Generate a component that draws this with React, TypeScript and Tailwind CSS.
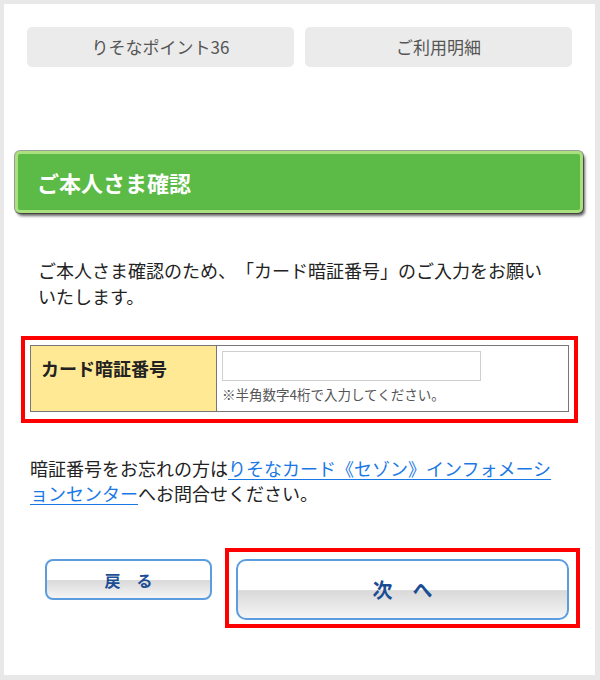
export default function App() {
  const font = { fontFamily: '"Noto Sans CJK JP", "Noto Sans", sans-serif' };
  return (
    <div
      className="w-[600px] h-[680px] bg-[#e8e8e8] pt-[4px] pl-[4px] pr-[5px] pb-[5px] [text-spacing-trim:space-all]"
      style={font}
    >
      <div className="h-full bg-white flex flex-col">
        {/* tabs */}
        <div className="flex gap-[11px] pt-[23px] px-[23px]">
          <div className="flex-1 h-[40px] rounded-[5px] bg-[#ebebeb] flex items-center justify-center text-[17px] text-[#555]">
            りそなポイント36
          </div>
          <div className="flex-1 h-[40px] rounded-[5px] bg-[#ebebeb] flex items-center justify-center text-[17px] text-[#555]">
            ご利用明細
          </div>
        </div>

        {/* header */}
        <div className="mt-[84px] ml-[11px] mr-[12px] h-[62px] rounded-[5px] bg-[#5cba46] border-[3px] border-[#abe07f] shadow-[2px_3px_3px_rgba(0,0,0,0.6),0_0_0_1px_#9c9c9c] flex items-center pl-[19px]">
          <h1 className="text-[22px] font-bold text-white leading-none">ご本人さま確認</h1>
        </div>

        {/* message */}
        <p className="mt-[44px] ml-[34px] w-[512px] text-[18px] leading-[26px] text-[#222]">
          ご本人さま確認のため、「カード暗証番号」のご入力をお願いいたします。
        </p>

        {/* pin table */}
        <div className="mt-[27px] mx-[17px] border-[4px] border-[#ff0000] pt-[5px] px-[5px] pb-[7px]">
          <div className="flex border border-[#777] h-[67px]">
            <div className="w-[186px] bg-[#ffe994] border-r border-[#777] pt-[9px] pl-[10px] text-[18px] leading-[26px] font-bold text-[#222]">
              カード暗証番号
            </div>
            <div className="flex-1 pl-[5px] pt-[5px]">
              <input
                type="text"
                className="block w-[259px] h-[30px] border border-[#cfcfcf] bg-white outline-none"
              />
              <div className="mt-[4px] text-[13.5px] leading-[18px] text-[#555]">
                ※半角数字4桁で入力してください。
              </div>
            </div>
          </div>
        </div>

        {/* forgot */}
        <p className="mt-[33px] ml-[26px] w-[530px] text-[18px] leading-[25px] text-[#222]">
          暗証番号をお忘れの方は
          <a href="#" className="text-[#1a78e6] underline underline-offset-[3px]">
            りそなカード《セゾン》インフォメーションセンター
          </a>
          へお問合せください。
        </p>

        {/* buttons */}
        <div className="mt-[42px] flex items-start">
          <button className="mt-[11px] ml-[41px] w-[167px] h-[41px] rounded-[8px] border-2 border-[#5c9ddf] bg-[linear-gradient(to_bottom,#ffffff_0%,#ffffff_50%,#d9d9d9_52%,#f5f5f5_100%)] text-[16px] font-bold text-[#1b4d95]">
            戻　る
          </button>
          <div className="ml-[13px] border-[4px] border-[#ff0000] pt-[7px] px-[7px] pb-[4px]">
            <button className="w-[333px] h-[61px] rounded-[10px] border-2 border-[#5c9ddf] bg-[linear-gradient(to_bottom,#ffffff_0%,#ffffff_50%,#d9d9d9_52%,#f5f5f5_100%)] text-[20px] font-bold text-[#1b4d95]">
              次　へ
            </button>
          </div>
        </div>
      </div>
    </div>
  );
}
